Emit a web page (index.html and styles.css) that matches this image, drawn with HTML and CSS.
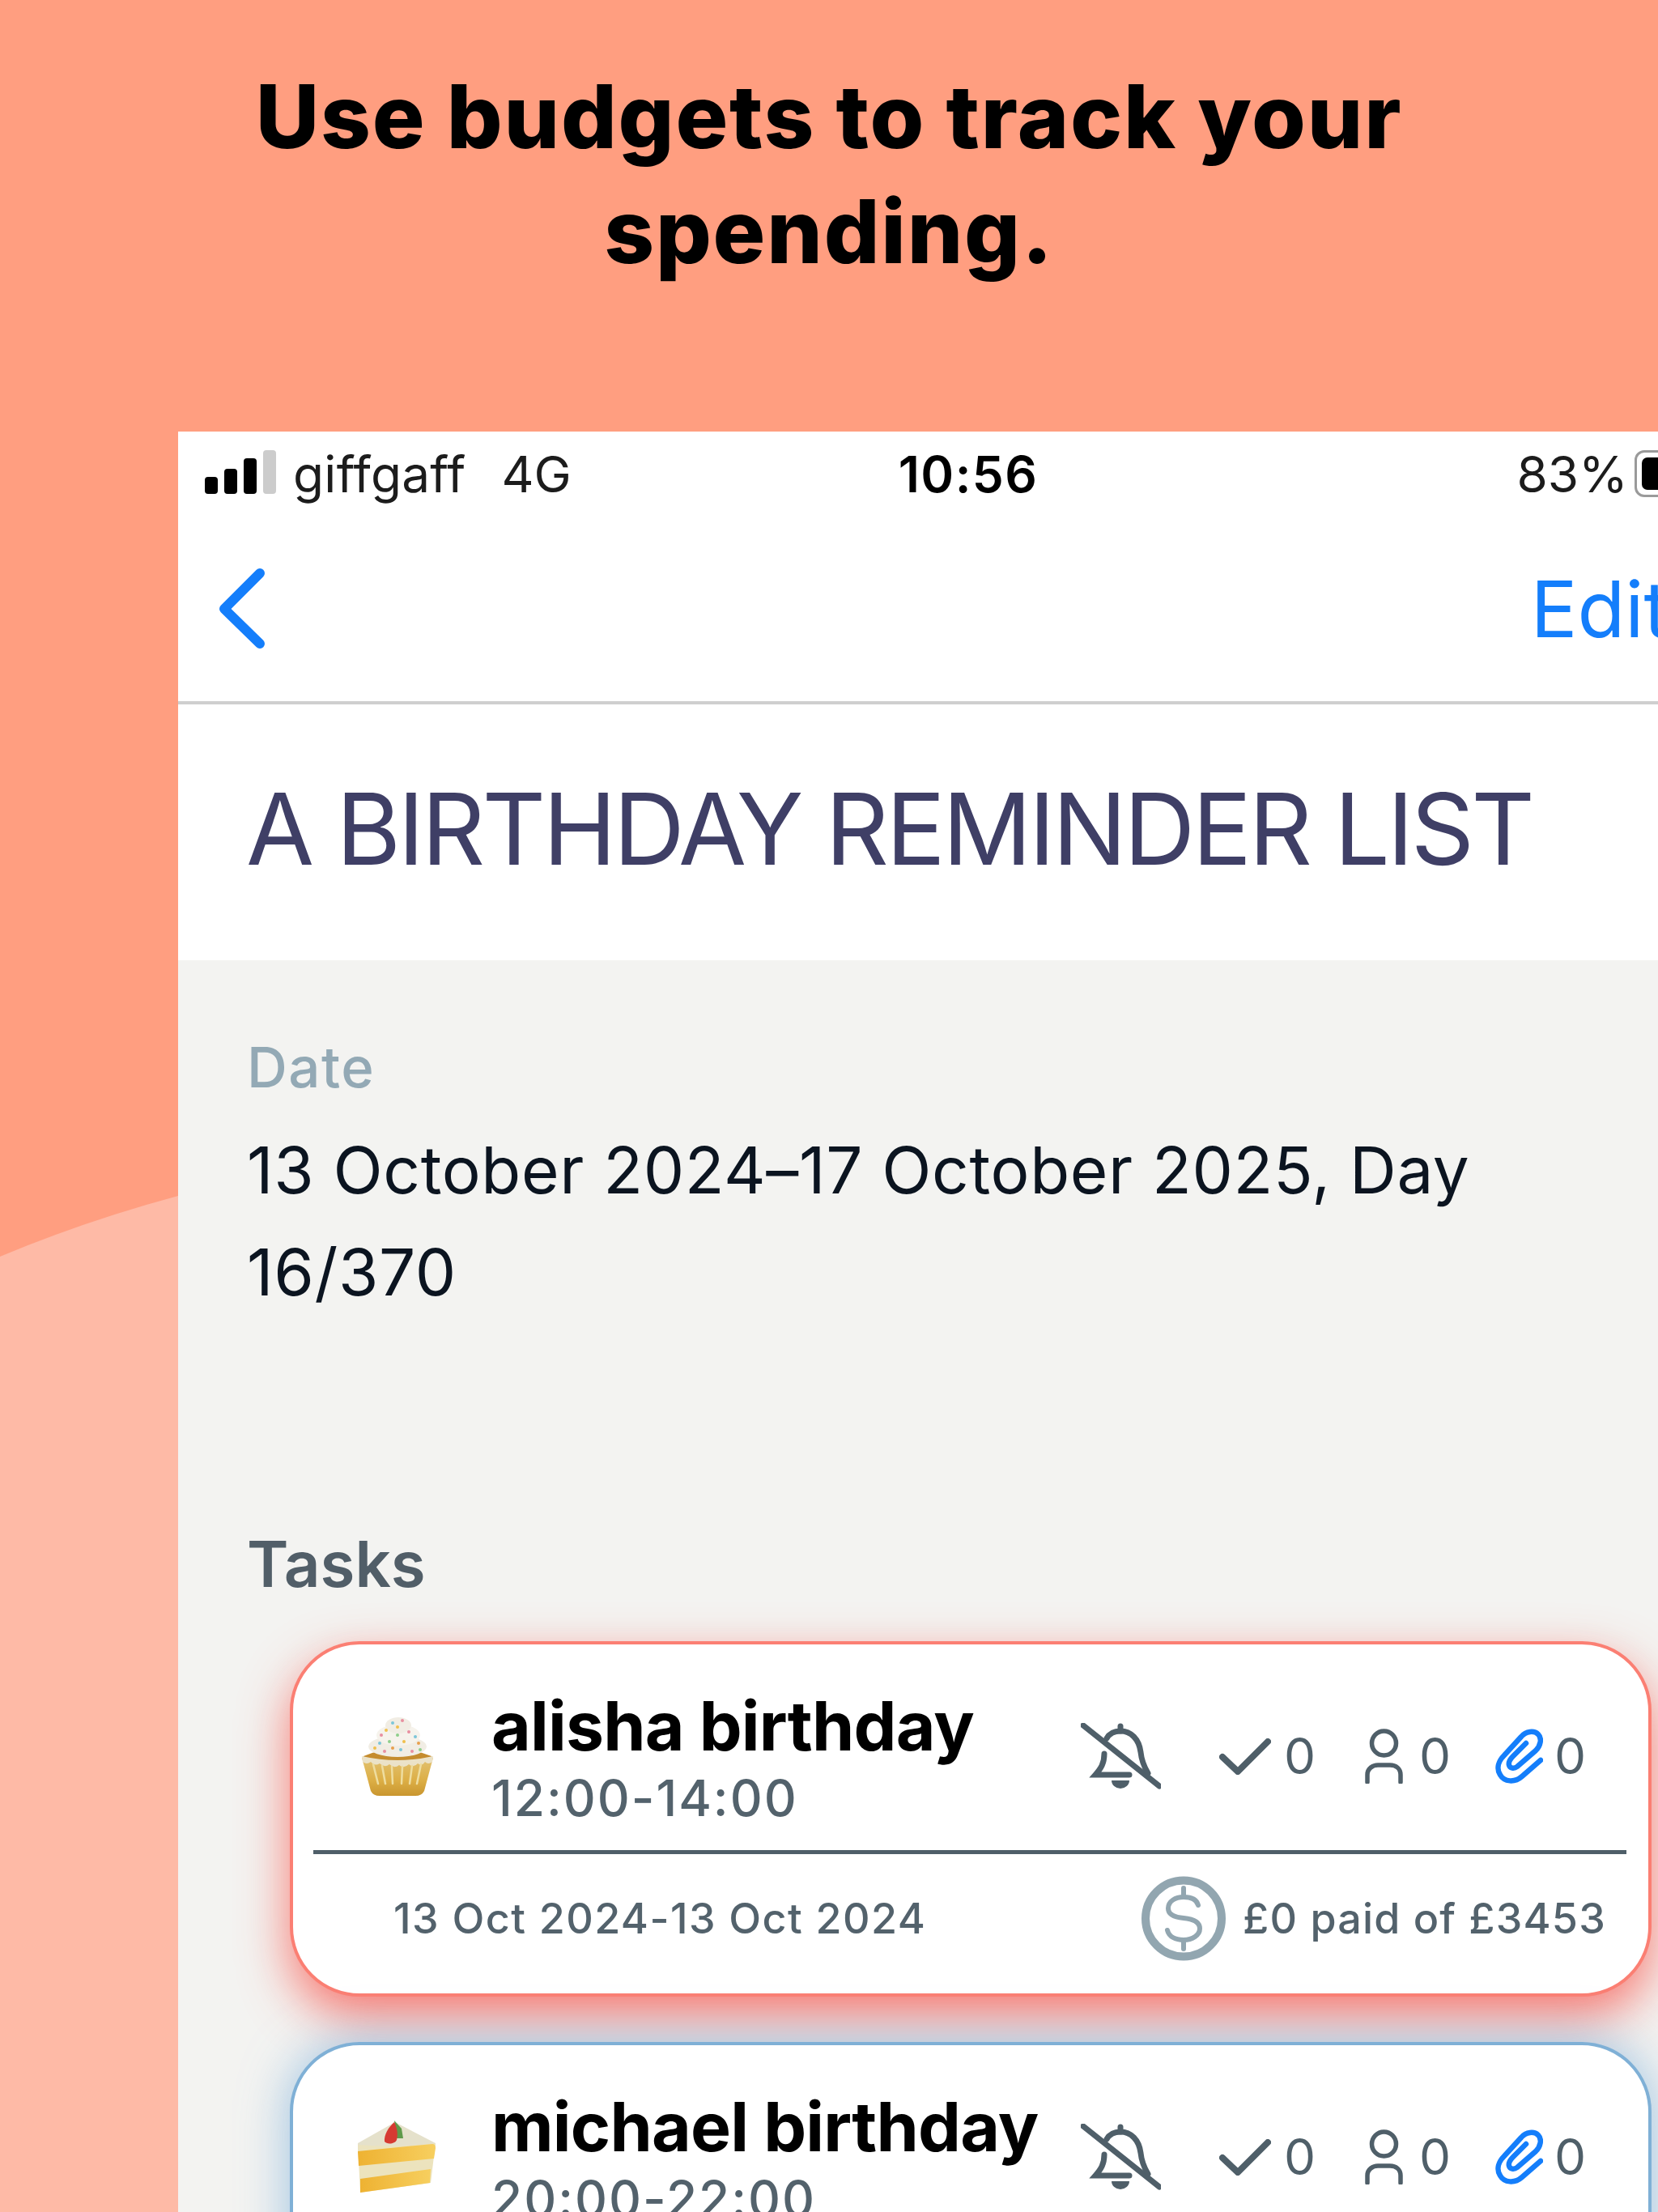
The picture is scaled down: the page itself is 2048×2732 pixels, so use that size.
FILE: index.html
```html
<!DOCTYPE html>
<html lang="en">
<head>
<meta charset="utf-8">
<title>Use budgets to track your spending</title>
<link rel="stylesheet" href="styles.css">
</head>
<body>
<svg class="defs" width="0" height="0" aria-hidden="true">
  <defs>
    <symbol id="i-bell" viewBox="0 0 99 82">
      <g fill="none" stroke="currentColor" stroke-width="7" stroke-linecap="round">
        <path d="M3 3 L97 78"/>
        <path d="M32 19 C36 12 42 10 49 10 C62 10 72 20 74 36 C75 46 77 52 83 62"/>
        <path d="M29 38 C29 50 25 56 18 64 H60"/>
        <path d="M49 4 V10"/>
      </g>
      <path d="M38 71 H60 A11 10 0 0 1 38 71Z" fill="currentColor"/>
    </symbol>
    <symbol id="i-check" viewBox="0 0 64 45">
      <path d="M4 23 L23 41 L60 4" fill="none" stroke="currentColor" stroke-width="8" stroke-linecap="round" stroke-linejoin="round"/>
    </symbol>
    <symbol id="i-person" viewBox="0 0 47 68">
      <g fill="none" stroke="currentColor" stroke-width="5.500" stroke-linecap="round">
        <ellipse cx="23.500" cy="18" rx="15" ry="15"/>
        <path d="M3 66 V57 C3 49 10 45 16 45 H31 C38 45 44 49 44 57 V66"/>
      </g>
    </symbol>
    <symbol id="i-clip" viewBox="0 0 59 68">
      <path d="M56 39 L33 59 C24 67 11 66 6 57 C1 49 4 40 11 33 L32 10 C38 3 48 2 53 7 C58 12 56 21 50 27 L27 47 C23 50 18 49 17 45 C16 41 19 37 22 34 L38 18" fill="none" stroke="currentColor" stroke-width="6.500" stroke-linecap="round"/>
    </symbol>
    <symbol id="i-coin" viewBox="0 0 104 105">
      <g fill="none" stroke="currentColor" stroke-linecap="round">
        <circle cx="52" cy="52.500" r="47" stroke-width="10"/>
        <path stroke-width="6" d="M70 36 C68 28 60 26 52 26 C42 26 33 31 33 40 C33 48 41 51 52 52 C63 53 72 56 72 65 C72 73 63 79 52 79 C42 79 34 75 32 67"/>
        <path stroke-width="6" d="M52 15 V26 M52 79 V90"/>
      </g>
    </symbol>
    <linearGradient id="g-wrap" x1="0" x2="0" y1="0" y2="1">
      <stop offset="0" stop-color="#e2c271"/><stop offset=".6" stop-color="#dcae45"/><stop offset="1" stop-color="#c9962f"/>
    </linearGradient>
    <linearGradient id="g-sponge" x1="0" x2="1" y1="0" y2="0">
      <stop offset="0" stop-color="#eeb232"/><stop offset="1" stop-color="#f7cf5f"/>
    </linearGradient>
  </defs>
</svg>

<svg class="wave" viewBox="0 0 220 1332" preserveAspectRatio="none" aria-hidden="true">
  <path d="M0 152 Q105 108 220 77 V1332 H0Z"/>
</svg>

<h1 class="headline">Use budgets to track your spending.</h1>

<main class="phone">
  <div class="status">
    <div class="status-left">
      <div class="signal">
        <span class="bar bar-1"></span><span class="bar bar-2"></span><span class="bar bar-3"></span><span class="bar bar-4"></span>
      </div>
      <span class="carrier">giffgaff</span>
      <span class="network">4G</span>
    </div>
    <div class="clock">10:56</div>
    <div class="status-right">
      <span class="percent">83%</span>
      <div class="battery"><span class="battery-level"></span></div>
    </div>
  </div>

  <nav class="nav">
    <svg class="back" viewBox="0 0 57 99" aria-hidden="true"><path d="M51 6 L7 50 L51 93" fill="none" stroke="currentColor" stroke-width="12" stroke-linecap="round" stroke-linejoin="round"/></svg>
    <span class="edit">Edit</span>
  </nav>

  <header class="title-bar"><h2 class="title">A BIRTHDAY REMINDER LIST</h2></header>

  <section class="content">
    <div class="label">Date</div>
    <p class="date-value">13 October 2024–17 October 2025, Day 16/370</p>
    <h3 class="tasks-heading">Tasks</h3>

    <article class="card card-red">
      <div class="card-main">
        <svg class="emoji emoji-cupcake" viewBox="0 0 88 100" aria-hidden="true">
          <path d="M2 50 Q44 32 86 50 L84 60 H4Z" fill="#c58c2e"/>
          <ellipse cx="44" cy="38" rx="36" ry="13" fill="#f1ede4"/>
          <ellipse cx="45" cy="24" rx="27" ry="13" fill="#f6f3ec"/>
          <ellipse cx="45" cy="12" rx="16" ry="10" fill="#f1ede4"/>
          <g>
            <circle cx="24" cy="24" r="2" fill="#e88fa0"/><circle cx="38" cy="9" r="2" fill="#7cc6d9"/><circle cx="50" cy="6" r="2" fill="#e88fa0"/>
            <circle cx="58" cy="20" r="2" fill="#e88fa0"/><circle cx="34" cy="32" r="2" fill="#8fcf8b"/><circle cx="70" cy="34" r="2" fill="#e8a04d"/>
            <circle cx="16" cy="40" r="2" fill="#f0c04d"/><circle cx="48" cy="42" r="2" fill="#7cc6d9"/><circle cx="62" cy="44" r="2" fill="#e88fa0"/>
            <circle cx="44" cy="24" r="2" fill="#8fcf8b"/><circle cx="28" cy="44" r="2" fill="#e88fa0"/><circle cx="52" cy="32" r="2" fill="#f0c04d"/>
            <circle cx="66" cy="26" r="2" fill="#7cc6d9"/><circle cx="30" cy="18" r="2" fill="#f0c04d"/><circle cx="22" cy="34" r="2" fill="#7cc6d9"/>
            <circle cx="72" cy="42" r="2" fill="#8fcf8b"/><circle cx="44" cy="14" r="2" fill="#f0c04d"/><circle cx="38" cy="40" r="2" fill="#e8a04d"/>
          </g>
          <path d="M0 52 Q44 62 88 52 L77 93 Q74 99 66 99 H22 Q14 99 11 93Z" fill="url(#g-wrap)"/>
          <path d="M0 50 Q44 60 88 50 L87 57 Q82 61 78 57 Q74 63 69 59 Q64 65 58 60 Q52 66 46 61 Q40 66 34 60 Q28 65 22 59 Q16 63 11 57 Q6 61 1 57Z" fill="#ebe2c8"/>
          <path d="M14 60 L20 84 M25 62 L29 84 M37 63 L38 84 M50 63 L49 84 M62 62 L59 84 M73 60 L68 84" stroke="#eedd9f" stroke-width="2.500" fill="none" stroke-linecap="round"/>
        </svg>
        <div class="task-text">
          <div class="task-name">alisha birthday</div>
          <div class="task-time">12:00-14:00</div>
        </div>
        <div class="task-icons">
          <svg class="ic ic-bell"><use href="#i-bell"/></svg>
          <svg class="ic ic-check"><use href="#i-check"/></svg><span class="count count-check">0</span>
          <svg class="ic ic-person"><use href="#i-person"/></svg><span class="count count-person">0</span>
          <svg class="ic ic-clip"><use href="#i-clip"/></svg><span class="count count-clip">0</span>
        </div>
      </div>
      <div class="card-rule"></div>
      <div class="card-foot">
        <span class="foot-dates">13 Oct 2024-13 Oct 2024</span>
        <svg class="ic ic-coin"><use href="#i-coin"/></svg>
        <span class="foot-paid">£0 paid of £3453</span>
      </div>
    </article>

    <article class="card card-blue">
      <div class="card-main">
        <svg class="emoji emoji-cake" viewBox="0 0 97 90" aria-hidden="true">
          <path d="M46 2 L96 28 L95 36 L0 42 L0 28Z" fill="#e5e1cb"/>
          <path d="M0 30 Q50 34 96 28 L90 77 L3 89Z" fill="#ece3bd"/>
          <path d="M0 38 L92 29 Q96 29 96 34 L94 47 L1 56Z" fill="url(#g-sponge)"/>
          <path d="M3 72 L90 60 L89 77 L3 89Z" fill="url(#g-sponge)"/>
          <path d="M45 0 L54 10 L56 22 L48 22Z" fill="#5f9a4a"/>
          <path d="M45 2 C38 8 32 18 33 26 C36 30 46 29 48 24 C50 16 48 8 45 2Z" fill="#d63a32"/>
        </svg>
        <div class="task-text">
          <div class="task-name">michael birthday</div>
          <div class="task-time">20:00-22:00</div>
        </div>
        <div class="task-icons">
          <svg class="ic ic-bell"><use href="#i-bell"/></svg>
          <svg class="ic ic-check"><use href="#i-check"/></svg><span class="count count-check">0</span>
          <svg class="ic ic-person"><use href="#i-person"/></svg><span class="count count-person">0</span>
          <svg class="ic ic-clip"><use href="#i-clip"/></svg><span class="count count-clip">0</span>
        </div>
      </div>
    </article>
  </section>
</main>
</body>
</html>
```
FILE: styles.css
```css
* { box-sizing: border-box; }
html, body { margin: 0; padding: 0; width: 2048px; height: 2732px; overflow: hidden; }
body {
  position: relative;
  background: #ff9e80;
  font-family: "Inter", "Liberation Sans", sans-serif;
  color: #000;
}
.defs { position: absolute; }
.wave { position: absolute; left: 0; top: 1400px; width: 220px; height: 1332px; overflow: visible; }
.wave path { fill: #febaa6; }

.headline {
  position: relative;
  margin: 0 auto;
  width: 1500px;
  height: 533px;
  padding-top: 73px;
  font-size: 108px;
  line-height: 142px;
  font-weight: 800;
  text-align: center;
  letter-spacing: 1.800px;
}

.phone {
  position: relative;
  margin-left: 220px;
  width: 1952px;
  height: 2199px;
  overflow: hidden;
  background: #fff;
}

.status {
  display: grid;
  grid-template-columns: 1fr auto 1fr;
  align-items: center;
  height: 104px;
  padding: 0 33px;
  font-size: 62px;
  color: #1c1c1c;
}
.status-left { display: flex; align-items: center; }
.signal { display: flex; align-items: flex-end; gap: 8px; height: 54px; margin-bottom: 4px; }
.bar { display: block; width: 16px; border-radius: 4px; background: #000; }
.bar-1 { height: 21px; }
.bar-2 { height: 31px; }
.bar-3 { height: 44px; }
.bar-4 { height: 54px; background: #cccccc; }
.carrier { margin-left: 21px; letter-spacing: 0.300px; }
.network { margin-left: 44px; }
.clock { font-weight: 600; color: #000; letter-spacing: 1.400px; }
.status-right { display: flex; align-items: center; justify-content: flex-end; gap: 8px; }
.battery {
  width: 120px;
  height: 58px;
  padding: 6px;
  border: 3px solid #9a9a9a;
  border-radius: 12px;
}
.battery-level { display: block; width: 78%; height: 100%; border-radius: 7px; background: #000; }

.nav {
  display: flex;
  align-items: center;
  justify-content: space-between;
  height: 233px;
  padding: 0 110px 0 50px;
  border-bottom: 4px solid #cfcfcf;
  color: #147efb;
}
.back { width: 57px; height: 99px; }
.edit { font-size: 96px; }

.title-bar {
  display: flex;
  align-items: center;
  height: 316px;
  padding: 0 0 10px 84px;
}
.title {
  margin: 0;
  font-size: 122px;
  font-weight: 400;
  letter-spacing: -3.600px;
  color: #3f3f66;
}

.content {
  height: 1546px;
  padding: 92px 0 0 85px;
  background: #f3f3f1;
}
.label {
  font-size: 69px;
  line-height: 80px;
  font-weight: 500;
  letter-spacing: 1.500px;
  color: #93a9b5;
}
.date-value {
  margin: 24px 0 0;
  width: 1560px;
  font-size: 80px;
  line-height: 126px;
  letter-spacing: 0.660px;
  color: #0b1420;
}
.tasks-heading {
  margin: 253px 0 0;
  font-size: 78px;
  line-height: 90px;
  font-weight: 600;
  color: #515e68;
}

.card {
  position: relative;
  width: 1682px;
  margin: 50px 0 56px 53px;
  border: 4px solid;
  border-radius: 86px;
  background: #fff;
}
.card-red { height: 439px; border-color: #fb7f73; box-shadow: 0 24px 60px rgba(250, 70, 60, .7); }
.card-blue { height: 439px; margin-top: 0; border-color: #7fb0d6; box-shadow: 0 0 60px rgba(96, 160, 214, .6); }

.card-main {
  display: flex;
  align-items: center;
  height: 254px;
  padding: 40px 78px 18px 85px;
}
.emoji { flex: none; }
.emoji-cupcake { width: 88px; height: 100px; margin-right: 72px; }
.emoji-cake { width: 97px; height: 90px; margin: 0 68px 0 -5px; }
.task-text { display: flex; flex-direction: column; }
.task-name {
  font-size: 84px;
  line-height: 98px;
  margin-bottom: 5px;
  font-weight: 700;
  letter-spacing: -0.800px;
  white-space: nowrap;
}
.task-time {
  font-size: 62px;
  line-height: 70px;
  font-weight: 500;
  color: #53626c;
  letter-spacing: 2px;
}

.task-icons {
  display: flex;
  align-items: center;
  margin-left: auto;
  color: #4f5f69;
  font-size: 62px;
  line-height: 70px;
}
.ic { display: block; flex: none; }
.ic-bell { width: 99px; height: 82px; }
.ic-check { width: 64px; height: 45px; margin-left: 72px; }
.ic-person { width: 47px; height: 68px; margin-left: 62px; }
.ic-clip { width: 59px; height: 68px; margin-left: 56px; color: #147efb; }
.count { width: 38px; text-align: center; }
.count-check { margin-left: 16px; }
.count-person { margin-left: 20px; }
.count-clip { margin-left: 14px; }

.card-rule { height: 5px; margin: 0 27px 0 25px; background: #4f5f69; }
.card-foot {
  display: flex;
  align-items: center;
  height: 172px;
  padding: 0 52px 14px 124px;
  font-size: 52px;
  font-weight: 500;
  color: #53626c;
  letter-spacing: 1.200px;
}
.foot-dates { margin-right: auto; letter-spacing: 1.450px; }
.ic-coin { width: 104px; height: 105px; color: #92a6b0; margin-right: 21px; }
```
